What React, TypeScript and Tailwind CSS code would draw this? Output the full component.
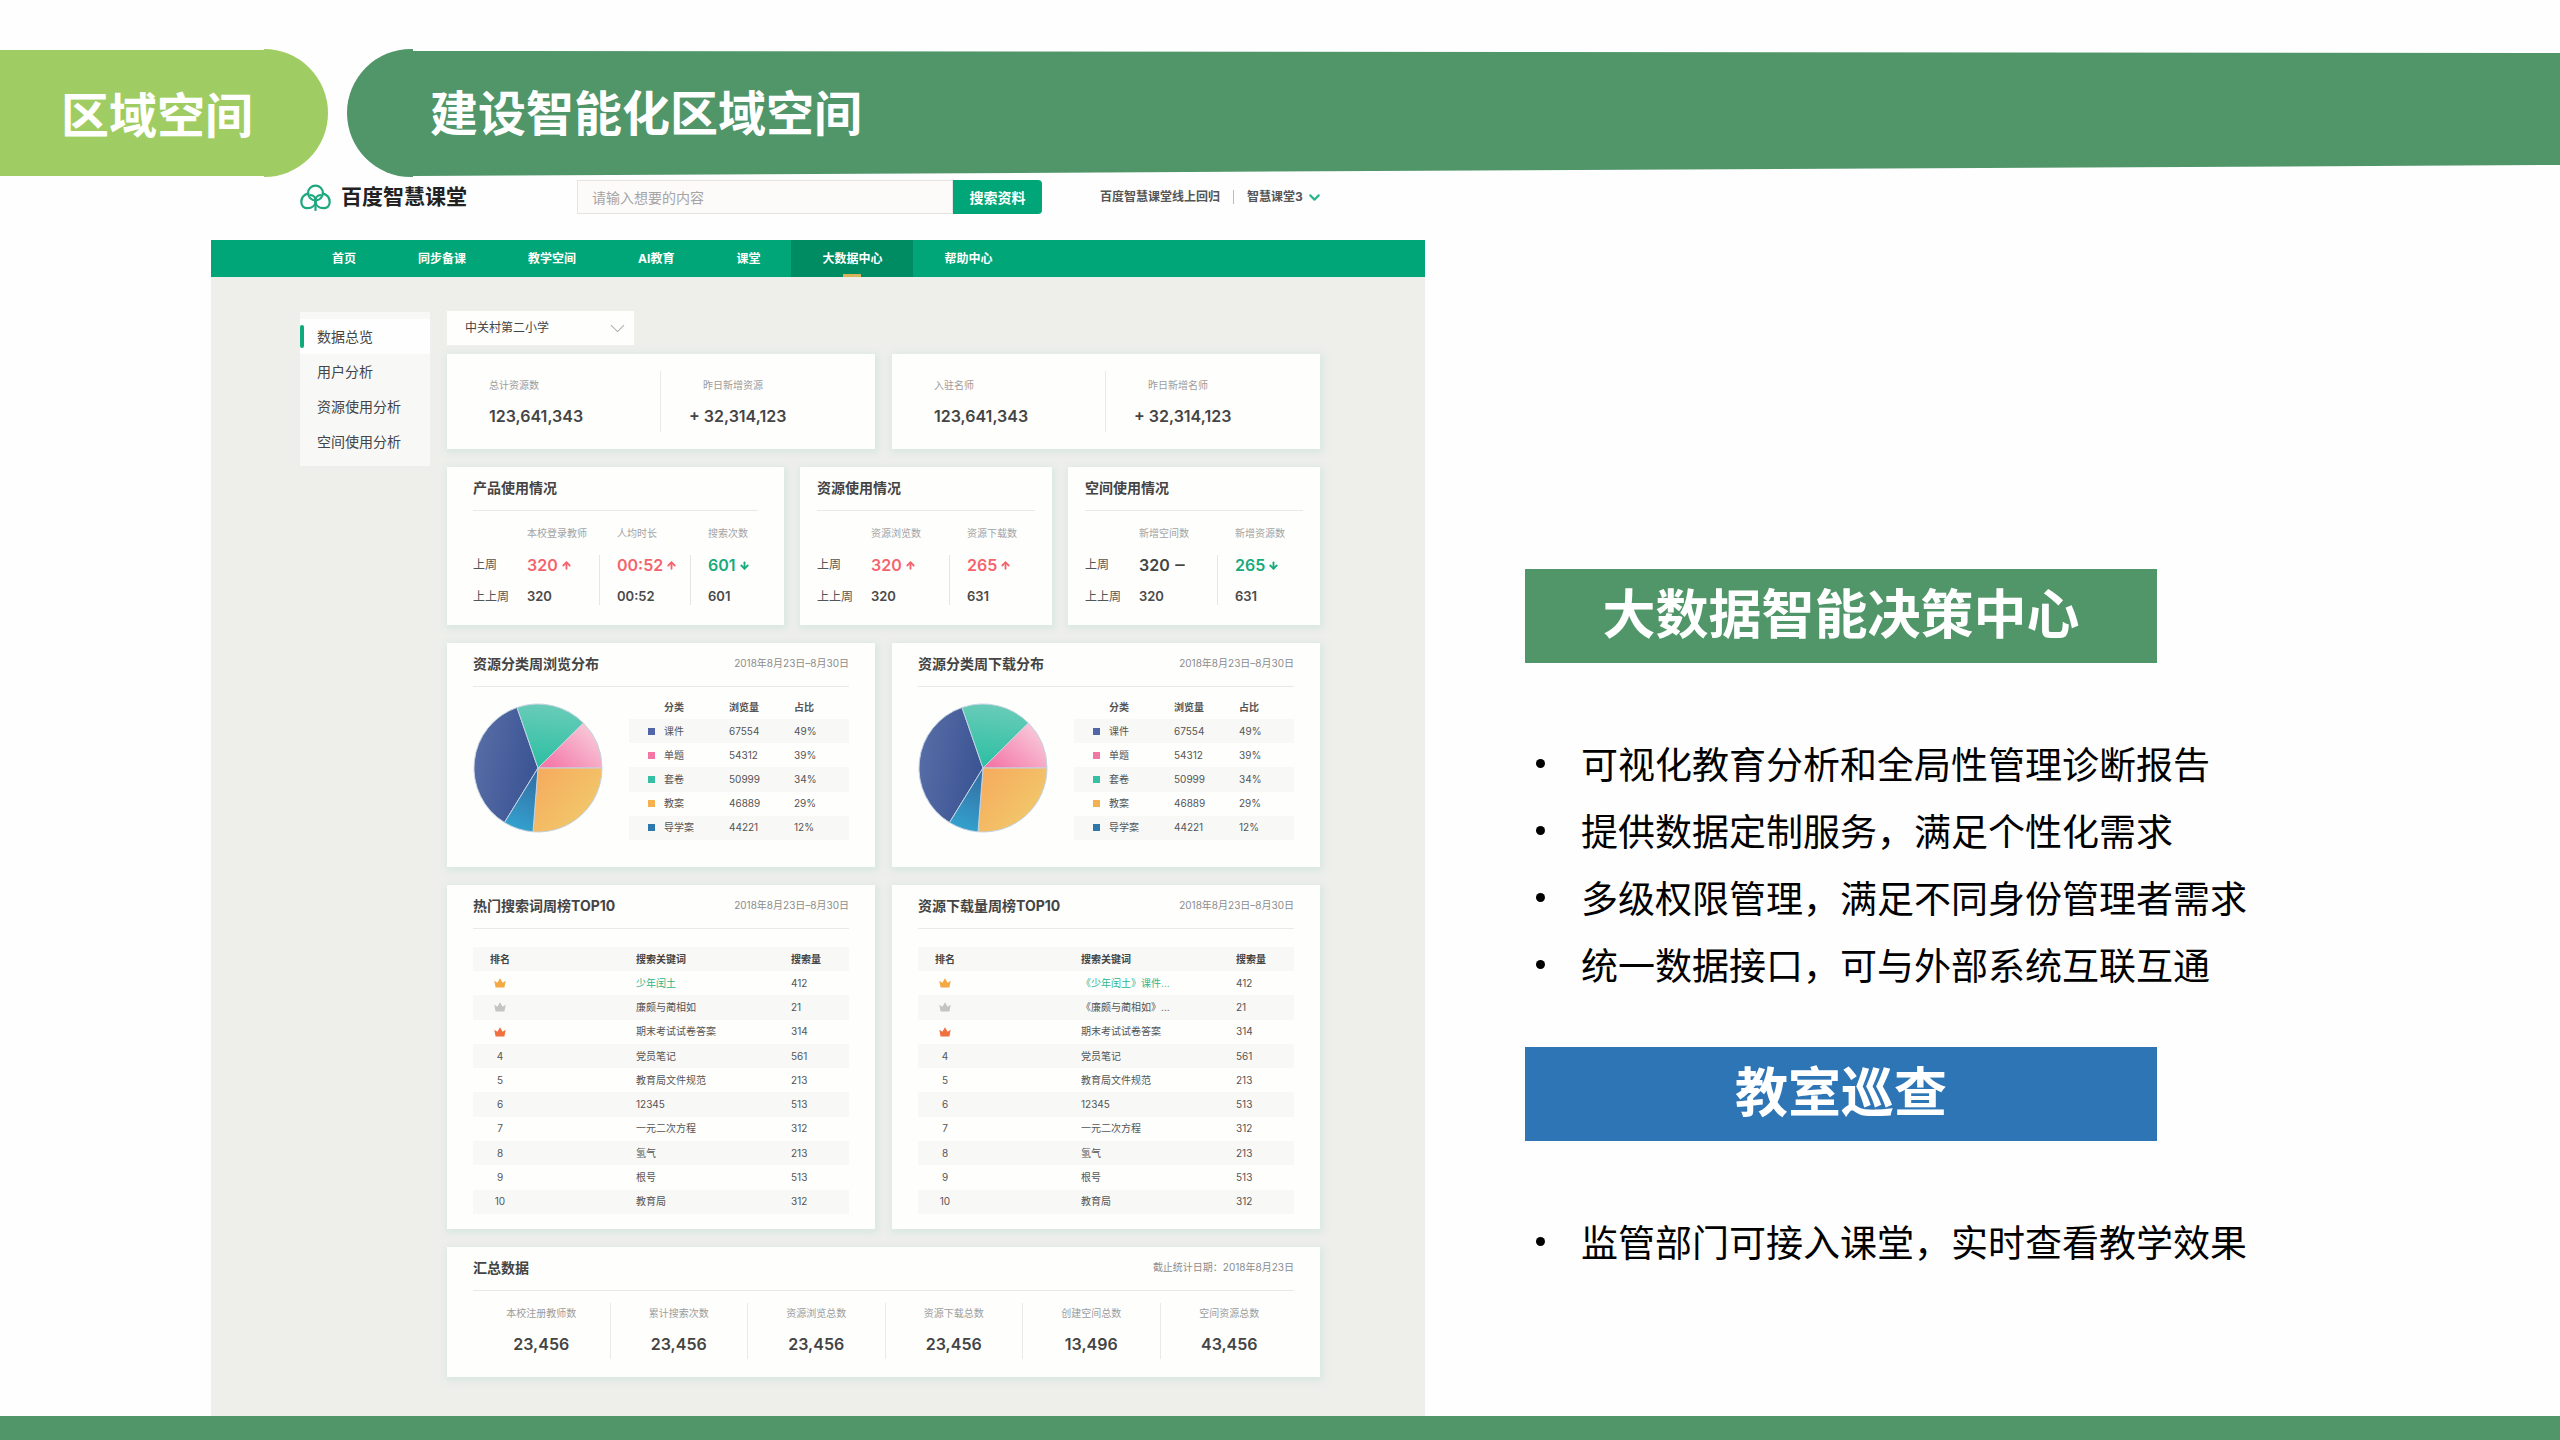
import { ArrowDown, ArrowUp, ChevronDown, Minus } from "lucide-react";

type Trend = 'up' | 'down' | 'flat'

const navItems = ['首页', '同步备课', '教学空间', 'AI教育', '课堂', '大数据中心', '帮助中心']
const sideItems = ['数据总览', '用户分析', '资源使用分析', '空间使用分析']

const totals = [
  [
    { label: '总计资源数', value: '123,641,343' },
    { label: '昨日新增资源', value: '+ 32,314,123' },
  ],
  [
    { label: '入驻名师', value: '123,641,343' },
    { label: '昨日新增名师', value: '+ 32,314,123' },
  ],
]

const usageCards: { title: string; wide?: boolean; cols: { label: string; now: string; prev: string; trend: Trend }[] }[] = [
  {
    title: '产品使用情况',
    wide: true,
    cols: [
      { label: '本校登录教师', now: '320', prev: '320', trend: 'up' },
      { label: '人均时长', now: '00:52', prev: '00:52', trend: 'up' },
      { label: '搜索次数', now: '601', prev: '601', trend: 'down' },
    ],
  },
  {
    title: '资源使用情况',
    cols: [
      { label: '资源浏览数', now: '320', prev: '320', trend: 'up' },
      { label: '资源下载数', now: '265', prev: '631', trend: 'up' },
    ],
  },
  {
    title: '空间使用情况',
    cols: [
      { label: '新增空间数', now: '320', prev: '320', trend: 'flat' },
      { label: '新增资源数', now: '265', prev: '631', trend: 'down' },
    ],
  },
]

const categories = [
  { name: '课件', count: '67554', share: '49%', color: 'bg-[#5166a8]' },
  { name: '单题', count: '54312', share: '39%', color: 'bg-[#f277a5]' },
  { name: '套卷', count: '50999', share: '34%', color: 'bg-[#35bfa3]' },
  { name: '教案', count: '46889', share: '29%', color: 'bg-[#f5b04f]' },
  { name: '导学案', count: '44221', share: '12%', color: 'bg-[#2f78ad]' },
]

const rankVolumes = ['412', '21', '314', '561', '213', '513', '312', '213', '513', '312']
const commonWords = ['期末考试试卷答案', '党员笔记', '教育局文件规范', '12345', '一元二次方程', '氢气', '根号', '教育局']
const hotWords = ['少年闰土', '廉颇与蔺相如', ...commonWords]
const hotDownloads = ['《少年闰土》课件…', '《廉颇与蔺相如》…', ...commonWords]

const summary = [
  { label: '本校注册教师数', value: '23,456' },
  { label: '累计搜索次数', value: '23,456' },
  { label: '资源浏览总数', value: '23,456' },
  { label: '资源下载总数', value: '23,456' },
  { label: '创建空间总数', value: '13,496' },
  { label: '空间资源总数', value: '43,456' },
]

const features = [
  '可视化教育分析和全局性管理诊断报告',
  '提供数据定制服务，满足个性化需求',
  '多级权限管理，满足不同身份管理者需求',
  '统一数据接口，可与外部系统互联互通',
]

const crownColors = ['text-[#f3a843]', 'text-[#c4c4c4]', 'text-[#f0703f]']

const card = 'bg-[#fefefd] shadow-[1px_2px_7px_2px_#d9e8e1]'

function Logo() {
  return (
    <svg viewBox="0 0 31 27" className="h-[27px] w-[31px]" fill="none" stroke="#1fa880" strokeWidth="2.2" strokeLinecap="round">
      <circle cx="15.5" cy="9" r="7.4" />
      <path d="M8.2 9.4 C3.8 10.8 1.3 14 1.3 18 C1.3 22 4 24.2 7.5 24.2 C12 24.2 15.5 21.5 15.5 17" />
      <path d="M22.8 9.4 C27.2 10.8 29.7 14 29.7 18 C29.7 22 27 24.2 23.5 24.2 C19 24.2 15.5 21.5 15.5 17" />
      <path d="M10.5 11 C13 11.3 15 12.8 15.5 15.5 C16 12.8 18 11.3 20.5 11" />
      <path d="M15.5 15 V26" />
    </svg>
  )
}

function Crown({ className }: { className: string }) {
  return (
    <svg viewBox="0 0 12 10" className={`h-[10px] w-[12px] ${className}`} fill="currentColor">
      <path d="M0.3 2.8 L3.4 4.8 L6 0.3 L8.6 4.8 L11.7 2.8 L10.4 9.6 H1.6 Z" />
    </svg>
  )
}

function Pie({ id }: { id: string }) {
  return (
    <svg viewBox="0 0 130 130" className="h-[130px] w-[130px]" stroke="#c3d3e0" strokeWidth="1">
      <defs>
        <linearGradient id={`${id}-blue`} x1="0" y1="0" x2="1" y2="0.3">
          <stop offset="0" stopColor="#596fa8" />
          <stop offset="1" stopColor="#3c5594" />
        </linearGradient>
        <linearGradient id={`${id}-green`} x1="0.5" y1="0" x2="0.4" y2="1">
          <stop offset="0" stopColor="#6accb9" />
          <stop offset="1" stopColor="#2bbfa2" />
        </linearGradient>
        <linearGradient id={`${id}-pink`} x1="0.2" y1="1" x2="1" y2="0.4">
          <stop offset="0" stopColor="#f479a9" />
          <stop offset="1" stopColor="#f8c5d6" />
        </linearGradient>
        <linearGradient id={`${id}-yellow`} x1="0" y1="0" x2="1" y2="0.8">
          <stop offset="0" stopColor="#f6a95c" />
          <stop offset="1" stopColor="#f1cc6c" />
        </linearGradient>
        <linearGradient id={`${id}-sky`} x1="0.6" y1="0" x2="0.4" y2="1">
          <stop offset="0" stopColor="#346da4" />
          <stop offset="1" stopColor="#33a3cf" />
        </linearGradient>
      </defs>
      <path fill={`url(#${id}-blue)`} d="M65 65 L31.5 119.5 A64 64 0 0 1 44 4.5 Z" />
      <path fill={`url(#${id}-green)`} d="M65 65 L44 4.5 A64 64 0 0 1 110.4 20 Z" />
      <path fill={`url(#${id}-pink)`} d="M65 65 L110.4 20 A64 64 0 0 1 129 65 Z" />
      <path fill={`url(#${id}-yellow)`} d="M65 65 L129 65 A64 64 0 0 1 60 128.8 Z" />
      <path fill={`url(#${id}-sky)`} d="M65 65 L60 128.8 A64 64 0 0 1 31.5 119.5 Z" />
    </svg>
  )
}

function CardHead({ title, note }: { title: string; note?: string }) {
  return (
    <div className="flex h-[44px] items-center justify-between border-b border-[#e9e9e9] pb-[3px]">
      <h3 className="text-[14px] font-bold text-[#444]">{title}</h3>
      {note && <span className="text-[10px] text-[#8c8c8c]">{note}</span>}
    </div>
  )
}

function TrendIcon({ trend }: { trend: Trend }) {
  if (trend === 'up') return <ArrowUp className="size-[11px]" strokeWidth={4} />
  if (trend === 'down') return <ArrowDown className="size-[11px]" strokeWidth={4} />
  return <Minus className="size-[14px]" strokeWidth={3} />
}

function UsageCard({ title, wide, cols }: (typeof usageCards)[number]) {
  const tone = { up: 'text-[#f4646f]', down: 'text-[#16aa7c]', flat: 'text-[#444]' }
  const colWidths = wide ? ['w-[72px]', 'w-[91px] pl-[18px]', 'pl-[18px]'] : ['w-[78px]', 'pl-[18px]']
  return (
    <section className={`h-[158px] ${wide ? 'px-[26px]' : 'px-[17px]'} ${card}`}>
      <CardHead title={title} />
      <table className="mt-[7px] w-full table-fixed text-left">
        <thead>
          <tr className="h-[31px] text-[10px] text-[#a3a3a3]">
            <th className="w-[54px]"></th>
            {cols.map((c, i) => (
              <th key={c.label} className={`font-normal whitespace-nowrap ${colWidths[i]}`}>{c.label}</th>
            ))}
          </tr>
        </thead>
        <tbody>
          <tr className="h-[32px]">
            <th className="text-[12px] font-normal text-[#555]">上周</th>
            {cols.map((c, i) => (
              <td key={c.label} className={i === 0 ? '' : 'bg-[linear-gradient(#e6e6e6,#e6e6e6)] bg-[length:1px_26px] bg-[position:0_100%] bg-no-repeat pl-[18px]'}>
                <span className={`flex items-center gap-[3px] text-[16px] font-semibold ${tone[c.trend]}`}>
                  {c.now}
                  <TrendIcon trend={c.trend} />
                </span>
              </td>
            ))}
          </tr>
          <tr className="h-[32px]">
            <th className="text-[12px] font-normal whitespace-nowrap text-[#555]">上上周</th>
            {cols.map((c, i) => (
              <td key={c.label} className={`text-[13px] font-semibold text-[#4a4a4a] ${i === 0 ? '' : 'bg-[linear-gradient(#e6e6e6,#e6e6e6)] bg-[length:1px_24px] bg-[position:0_0] bg-no-repeat pl-[18px]'}`}>
                {c.prev}
              </td>
            ))}
          </tr>
        </tbody>
      </table>
    </section>
  )
}

function ShareCard({ id, title }: { id: string; title: string }) {
  return (
    <section className={`h-[224px] px-[26px] ${card}`}>
      <CardHead title={title} note="2018年8月23日–8月30日" />
      <div className="flex justify-between">
        <div className="pt-[16px]"><Pie id={id} /></div>
        <table className="mt-[8px] h-[145px] w-[220px] table-fixed text-left text-[10px] text-[#555]">
          <thead>
            <tr className="h-[24px] text-[#555]">
              <th className="w-[35px]"></th>
              <th className="w-[65px] font-bold">分类</th>
              <th className="w-[65px] font-bold">浏览量</th>
              <th className="font-bold">占比</th>
            </tr>
          </thead>
          <tbody>
            {categories.map((c) => (
              <tr key={c.name} className="h-[24px] odd:bg-[#f8f8f7]">
                <td className="pl-[19px]"><div className={`size-[7px] ${c.color}`}></div></td>
                <td>{c.name}</td>
                <td>{c.count}</td>
                <td>{c.share}</td>
              </tr>
            ))}
          </tbody>
        </table>
      </div>
    </section>
  )
}

function RankCard({ title, words }: { title: string; words: string[] }) {
  return (
    <section className={`h-[344px] px-[26px] ${card}`}>
      <CardHead title={title} note="2018年8月23日–8月30日" />
      <table className="mt-[18px] h-[267px] w-full table-fixed text-left text-[10px] text-[#555]">
        <thead>
          <tr className="h-[24px] bg-[#f8f8f7] text-[#444]">
            <th className="w-[163px] font-bold"><div className="w-[54px] text-center">排名</div></th>
            <th className="w-[155px] font-bold">搜索关键词</th>
            <th className="font-bold">搜索量</th>
          </tr>
        </thead>
        <tbody>
          {words.map((word, i) => (
            <tr key={word} className="h-[24px] even:bg-[#f8f8f7]">
              <td>
                <div className="flex w-[54px] justify-center">
                  {i < 3 ? <Crown className={crownColors[i]} /> : i + 1}
                </div>
              </td>
              <td className={i === 0 ? 'text-[#2fb58c]' : ''}>{word}</td>
              <td>{rankVolumes[i]}</td>
            </tr>
          ))}
        </tbody>
      </table>
    </section>
  )
}

function Dashboard() {
  return (
    <div className="flex flex-col bg-[#eeeeeb] font-['Inter','Noto_Sans_CJK_SC',sans-serif]">
      <div className="flex h-[63px] items-start bg-[#fefefe] pt-[3px] pl-[89px]">
        <a href="#" className="flex h-[34px] w-[277px] items-center gap-[10px] text-[21px] font-bold text-[#222]">
          <Logo />
          百度智慧课堂
        </a>
        <form className="flex h-[34px] w-[465px]">
          <input
            aria-label="搜索"
            placeholder="请输入想要的内容"
            className="min-w-0 flex-1 border border-[#e6e4e2] bg-[#fdfafa] px-[14px] text-[14px] outline-none placeholder:text-[#a5a5a5]"
          />
          <button type="button" className="w-[89px] rounded-r-sm bg-[#00a678] text-[14px] font-bold text-white">搜索资料</button>
        </form>
        <div className="ml-[58px] flex h-[34px] items-center text-[12px] font-bold text-[#555]">
          <a href="#">百度智慧课堂线上回归</a>
          <span className="mx-[13px] h-[14px] w-px bg-[#bbb]"></span>
          <button className="flex items-center gap-[3px]">
            智慧课堂3
            <ChevronDown className="size-[17px] text-[#2bb58d]" strokeWidth={3} />
          </button>
        </div>
      </div>

      <nav className="flex h-[37px] bg-[#00a678] pl-[90px] text-[12px] font-bold text-white">
        {navItems.map((item) => (
          <a key={item} href="#" className={`flex flex-col items-center px-[31px] ${item === '大数据中心' ? 'bg-[#008c62]' : ''}`}>
            <span className="flex flex-1 items-center pt-[3px]">{item}</span>
            <span className={`h-[3px] w-[18px] ${item === '大数据中心' ? 'bg-[#d9b25a]' : ''}`}></span>
          </a>
        ))}
      </nav>

      <div className="flex items-start gap-[17px] pt-[34px] pr-[105px] pb-[39px] pl-[89px]">
        <aside className="mt-px h-[154px] w-[130px] bg-[#f8f8f7] pt-[7px]">
          {sideItems.map((item, i) => (
            <a key={item} href="#" className={`flex h-[35px] items-center text-[14px] text-[#444] ${i === 0 ? 'bg-[#fefefe]' : ''}`}>
              <span className={`mr-[13px] h-[23px] w-[4px] rounded-full ${i === 0 ? 'bg-[#10a97c]' : ''}`}></span>
              {item}
            </a>
          ))}
        </aside>

        <main className="flex flex-1 flex-col gap-[18px]">
          <div>
            <div className="relative w-[187px]">
              <select aria-label="学校" className="h-[34px] w-full appearance-none bg-[#fefefd] pl-[18px] text-[12px] text-[#444] outline-none">
                <option>中关村第二小学</option>
              </select>
              <ChevronDown className="pointer-events-none absolute top-[5px] right-[4px] size-[25px] text-[#b0b0b0]" strokeWidth={1} />
            </div>
            <div className="mt-[9px] grid grid-cols-2 gap-[17px]">
              {totals.map((group) => (
                <section key={group[0].label} className={`grid h-[95px] grid-cols-2 py-[17px] ${card}`}>
                  {group.map((t, i) => (
                    <div key={t.label} className={`flex flex-col gap-[8px] pt-[6px] ${i === 0 ? 'border-r border-[#e9e9e9] pl-[42px]' : 'pl-[28px]'}`}>
                      <div className={`text-[10px] leading-[16px] text-[#9c9c9c] ${i === 0 ? '' : 'pl-[14px]'}`}>{t.label}</div>
                      <div className="text-[16px] leading-[30px] font-semibold text-[#444]">{t.value}</div>
                    </div>
                  ))}
                </section>
              ))}
            </div>
          </div>

          <div className="grid grid-cols-[337fr_252fr_252fr] gap-4">
            {usageCards.map((u) => <UsageCard key={u.title} {...u} />)}
          </div>

          <div className="grid grid-cols-2 gap-[17px]">
            <ShareCard id="views" title="资源分类周浏览分布" />
            <ShareCard id="downloads" title="资源分类周下载分布" />
          </div>

          <div className="grid grid-cols-2 gap-[17px]">
            <RankCard title="热门搜索词周榜TOP10" words={hotWords} />
            <RankCard title="资源下载量周榜TOP10" words={hotDownloads} />
          </div>

          <section className={`h-[130px] px-[26px] ${card}`}>
            <CardHead title="汇总数据" note="截止统计日期：2018年8月23日" />
            <div className="-mr-[4px] mt-[12px] grid h-[56px] grid-cols-6 divide-x divide-[#e9e9e9] text-center">
              {summary.map((s) => (
                <div key={s.label} className="flex flex-col pt-[2px]">
                  <div className="text-[10px] leading-[16px] text-[#9c9c9c]">{s.label}</div>
                  <div className="pt-[8px] text-[16px] leading-[30px] font-semibold text-[#444]">{s.value}</div>
                </div>
              ))}
            </div>
          </section>
        </main>
      </div>
    </div>
  )
}

export default function App() {
  return (
    <div className="flex min-h-screen flex-col bg-[#fefefe] font-['Noto_Sans_CJK_SC',sans-serif]">
      <header className="flex gap-[19px] pt-[49px] text-[48px] leading-none font-bold text-white">
        <div className="flex h-[128px] w-[328px] items-center rounded-r-full bg-[#a0cd63] pb-[3px] pl-[61px] [clip-path:polygon(0_1px,264px_1px,264px_0,100%_0,100%_100%,264px_100%,264px_127px,0_127px)]">区域空间</div>
        <h1 className="flex h-[128px] flex-1 items-center rounded-l-full bg-[#509669] pb-[7px] pl-[83px] [clip-path:polygon(0_0,66px_0,66px_2px,100%_4px,100%_116px,66px_127px,66px_100%,0_100%)]">建设智能化区域空间</h1>
      </header>

      <div className="grid flex-1 grid-cols-[1214fr_1135fr] pl-[211px]">
        <Dashboard />
        <aside className="pt-[392px] pl-[100px]">
          <h2 className="flex h-[94px] w-[632px] items-center justify-center bg-[#509669] pb-[10px] text-[53px] leading-none font-bold text-white">大数据智能决策中心</h2>
          <ul className="mt-[67px] text-[37px] leading-[67px] text-black">
            {features.map((f) => (
              <li key={f} className="flex items-center gap-[36px] pl-[11px] whitespace-nowrap">
                <span className="size-[9px] rounded-full bg-black"></span>
                {f}
              </li>
            ))}
          </ul>
          <h2 className="mt-[49px] flex h-[94px] w-[632px] items-center justify-center bg-[#2e75b6] pb-[10px] text-[53px] leading-none font-bold text-white">教室巡查</h2>
          <ul className="mt-[67px] text-[37px] leading-[67px] text-black">
            <li className="flex items-center gap-[36px] pl-[11px] whitespace-nowrap">
              <span className="size-[9px] rounded-full bg-black"></span>
              监管部门可接入课堂，实时查看教学效果
            </li>
          </ul>
        </aside>
      </div>

      <footer className="h-[24px] bg-[#509669]"></footer>
    </div>
  )
}
